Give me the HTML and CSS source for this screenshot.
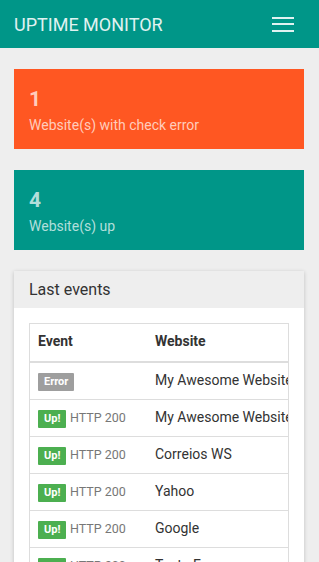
FILE: index.html
```html
<!DOCTYPE html>
<html lang="en">
<head>
    <meta charset="UTF-8">
    <meta name="viewport" content="width=device-width, initial-scale=1.0">
    <title>Uptime Monitor</title>
    <link rel="stylesheet" href="styles.css">
</head>
<body>
    <nav class="navbar">
        <span class="brand">UPTIME MONITOR</span>
        <button class="menu-toggle">
            <span class="bar"></span>
            <span class="bar"></span>
            <span class="bar"></span>
        </button>
    </nav>
    <div class="container">
        <div class="stat stat-error">
            <div class="stat-number">1</div>
            <div class="stat-label">Website(s) with check error</div>
        </div>
        <div class="stat stat-up">
            <div class="stat-number">4</div>
            <div class="stat-label">Website(s) up</div>
        </div>
        <div class="panel">
            <div class="panel-heading">Last events</div>
            <div class="panel-body">
                <div class="table-responsive">
                    <table>
                        <thead>
                            <tr>
                                <th>Event</th>
                                <th>Website</th>
                            </tr>
                        </thead>
                        <tbody>
                            <tr>
                                <td><span class="label label-error">Error</span></td>
                                <td>My Awesome Website</td>
                            </tr>
                            <tr>
                                <td><span class="label label-up">Up!</span> <span class="code">HTTP 200</span></td>
                                <td>My Awesome Website</td>
                            </tr>
                            <tr>
                                <td><span class="label label-up">Up!</span> <span class="code">HTTP 200</span></td>
                                <td>Correios WS</td>
                            </tr>
                            <tr>
                                <td><span class="label label-up">Up!</span> <span class="code">HTTP 200</span></td>
                                <td>Yahoo</td>
                            </tr>
                            <tr>
                                <td><span class="label label-up">Up!</span> <span class="code">HTTP 200</span></td>
                                <td>Google</td>
                            </tr>
                            <tr>
                                <td><span class="label label-up">Up!</span> <span class="code">HTTP 200</span></td>
                                <td>Testa Em</td>
                            </tr>
                        </tbody>
                    </table>
                </div>
            </div>
        </div>
    </div>
</body>
</html>
```

FILE: styles.css
```css
* {
    box-sizing: border-box;
}
body {
    margin: 0;
    font-family: Roboto, 'Liberation Sans', sans-serif;
    font-size: 14px;
    line-height: 1.42857;
    background-color: #eeeeee;
    color: #333;
}
.navbar {
    height: 48px;
    background-color: #009688;
    display: flex;
    align-items: center;
    justify-content: space-between;
    padding: 0 14px;
}
.brand {
    color: #e0f2f1;
    font-size: 18px;
    padding-top: 1px;
}
.menu-toggle {
    background: none;
    border: none;
    padding: 0;
    margin-right: 11px;
    width: 22px;
    display: flex;
    flex-direction: column;
    gap: 4.5px;
}
.bar {
    display: block;
    height: 2px;
    width: 22px;
    background-color: #e0f2f1;
}
.container {
    padding: 21px 15px 0 14px;
}
.stat {
    height: 80px;
    padding: 17px 15px;
    margin-bottom: 21px;
}
.stat-error {
    background-color: #ff5722;
    color: #ffccbc;
}
.stat-up {
    background-color: #009688;
    color: #b2dfdb;
}
.stat-number {
    font-size: 21px;
    font-weight: bold;
    line-height: 27px;
    margin-bottom: 2px;
}
.stat-label {
    font-size: 14px;
    line-height: 20px;
}
.panel {
    background-color: #fff;
    box-shadow: 0 1px 4px rgba(0, 0, 0, 0.2);
    height: 400px;
}
.panel-heading {
    background-color: #eeeeee;
    height: 37px;
    padding: 8px 15px;
    font-size: 16px;
    line-height: 22px;
    color: #333;
}
.panel-body {
    padding: 15px 15px 15px 15px;
}
.table-responsive {
    overflow: hidden;
    border: 1px solid #ddd;
    border-top: none;
}
table {
    border-collapse: collapse;
    width: 360px;
}
th, td {
    padding: 8px;
    text-align: left;
    white-space: nowrap;
    border-top: 1px solid #ddd;
    vertical-align: middle;
}
th {
    font-weight: bold;
    border-bottom: 2px solid #ddd;
    height: 38px;
}
th:first-child, td:first-child {
    width: 117px;
}
td {
    height: 37px;
}
.label {
    display: inline-block;
    font-size: 11px;
    font-weight: bold;
    color: #fff;
    padding: 2px 6px;
    line-height: 14px;
    border-radius: 1px;
}
.label-error {
    background-color: #9e9e9e;
}
.label-up {
    background-color: #4caf50;
}
.code {
    color: #777;
    font-size: 12.5px;
}
```
